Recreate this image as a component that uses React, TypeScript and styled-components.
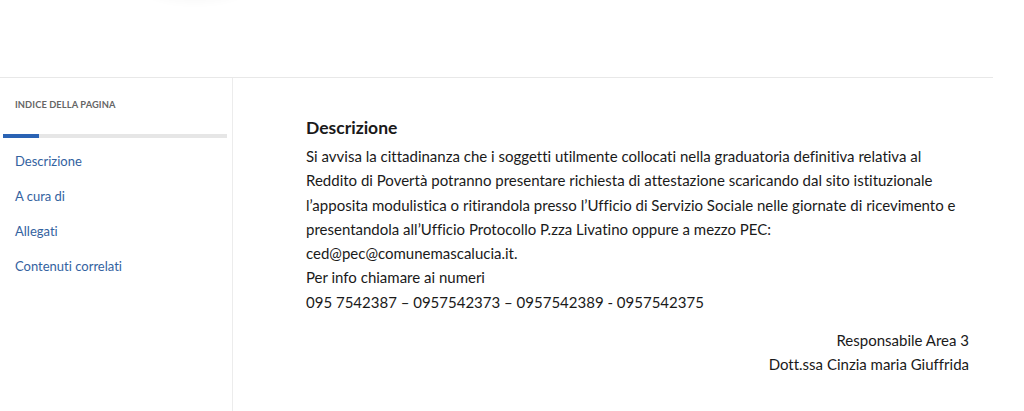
import React from 'react';
import styled, { createGlobalStyle } from 'styled-components';

const GlobalStyle = createGlobalStyle`
  html, body {
    margin: 0;
    padding: 0;
    background: #fff;
  }
  body {
    font-family: Lato, "Open Sans", "Liberation Sans", sans-serif;
    font-variant-ligatures: none;
    color: #1c1c1c;
  }
`

const links = ['Descrizione', 'A cura di', 'Allegati', 'Contenuti correlati']

const lines = [
  'Si avvisa la cittadinanza che i soggetti utilmente collocati nella graduatoria definitiva relativa al',
  'Reddito di Povertà potranno presentare richiesta di attestazione scaricando dal sito istituzionale',
  'l’apposita modulistica o ritirandola presso l’Ufficio di Servizio Sociale nelle giornate di ricevimento e',
  'presentandola all’Ufficio Protocollo P.zza Livatino oppure a mezzo PEC:',
  'ced@pec@comunemascalucia.it.',
  'Per info chiamare ai numeri',
  '095 7542387 – 0957542373 – 0957542389 - 0957542375',
]

const App: React.FC = () => {
  return (
    <Page>
      <GlobalStyle />
      <TopArea>
        <Shadow />
      </TopArea>
      <Layout>
        <Sidebar>
          <IndexTitle>Indice della pagina</IndexTitle>
          <Progress>
            <ProgressFill $value={16} />
          </Progress>
          <NavList>
            {links.map((x) => (
              <li key={x}>
                <NavLink href="#">{x}</NavLink>
              </li>
            ))}
          </NavList>
        </Sidebar>
        <Content>
          <Section>
            <Heading>Descrizione</Heading>
            <Paragraph>
              {lines.map((l, i) => (
                <React.Fragment key={i}>
                  {l}
                  {i < lines.length - 1 && <br />}
                </React.Fragment>
              ))}
            </Paragraph>
            <Signature>
              Responsabile Area 3
              <br />
              Dott.ssa Cinzia maria Giuffrida
            </Signature>
          </Section>
        </Content>
      </Layout>
    </Page>
  )
}

const Page = styled.div`
  width: 1024px;
  height: 411px;
  overflow: hidden;
  position: relative;
`

const TopArea = styled.div`
  height: 77px;
  position: relative;
`

const Shadow = styled.div`
  position: absolute;
  left: 145px;
  top: -30px;
  width: 100px;
  height: 30px;
  border-radius: 50%;
  box-shadow: 0 3px 8px rgba(0, 0, 0, 0.025);
`

const Layout = styled.div`
  width: 993px;
  border-top: 1px solid #e8e8e8;
  display: flex;
  height: 334px;
`

const Sidebar = styled.aside`
  width: 233px;
  border-right: 1px solid #ececec;
  padding: 21px 5px 0 3px;
  box-sizing: border-box;
`

const IndexTitle = styled.div`
  padding-left: 12px;
  font-size: 9.3px;
  font-weight: 700;
  letter-spacing: 0.1px;
  text-transform: uppercase;
  color: #666;
  line-height: 12px;
`

const Progress = styled.div`
  margin-top: 23px;
  height: 4px;
  background: #e6e6e6;
`

const ProgressFill = styled.div<{ $value: number }>`
  height: 100%;
  width: ${(p) => p.$value}%;
  background: #2a63b4;
`

const NavList = styled.ul`
  list-style: none;
  margin: 12px 0 0;
  padding: 0 0 0 12px;
  li {
    height: 35px;
  }
`

const NavLink = styled.a`
  font-size: 13px;
  line-height: 18px;
  color: #3362a0;
  text-decoration: none;
`

const Content = styled.main`
  flex: 1;
  padding: 38px 0 0 73px;
`

const Section = styled.section`
  width: 663px;
`

const Heading = styled.h3`
  margin: 0 0 5px;
  font-size: 17.5px;
  font-weight: 700;
  line-height: 23px;
  color: #1a1a1a;
`

const Paragraph = styled.p`
  margin: 0;
  font-size: 15px;
  line-height: 24.3px;
  color: #1a1a1a;
  white-space: nowrap;
`

const Signature = styled.p`
  margin: 14px 0 0;
  text-align: right;
  font-size: 15px;
  line-height: 24px;
  color: #1a1a1a;
`

export default App
